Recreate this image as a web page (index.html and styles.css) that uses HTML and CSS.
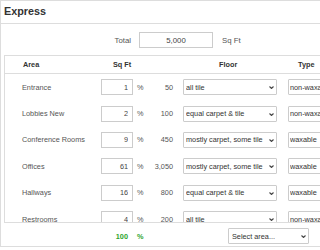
FILE: index.html
```html
<!DOCTYPE html>
<html lang="en">
<head>
  <meta charset="UTF-8">
  <title>Express</title>
  <link rel="stylesheet" href="styles.css">
</head>
<body>
  <div class="panel">
    <div class="panel-head">Express</div>

    <div class="total-row">
      <span class="total-label">Total</span>
      <input class="total-input" type="text" value="5,000">
      <span class="total-unit">Sq Ft</span>
    </div>

    <div class="grid-box">
      <div class="row head">
        <div class="h-area">Area</div>
        <div class="h-sqft">Sq Ft</div>
        <div class="h-floor">Floor</div>
        <div class="h-type">Type</div>
      </div>

      <div class="row">
        <div class="c-area">Entrance</div>
        <input class="c-pct" type="text" value="1">
        <span class="c-unit">%</span>
        <span class="c-num">50</span>
        <div class="sel c-floor">
          <select><option>all tile</option></select>
          <svg class="chev" width="5" height="3" viewBox="0 0 5 3"><polyline points="0.5,0.5 2.5,2.5 4.5,0.5"/></svg>
        </div>
        <div class="sel c-type">
          <select><option>non-waxable</option></select>
        </div>
      </div>

      <div class="row">
        <div class="c-area">Lobbies New</div>
        <input class="c-pct" type="text" value="2">
        <span class="c-unit">%</span>
        <span class="c-num">100</span>
        <div class="sel c-floor">
          <select><option>equal carpet &amp; tile</option></select>
          <svg class="chev" width="5" height="3" viewBox="0 0 5 3"><polyline points="0.5,0.5 2.5,2.5 4.5,0.5"/></svg>
        </div>
        <div class="sel c-type">
          <select><option>non-waxable</option></select>
        </div>
      </div>

      <div class="row">
        <div class="c-area">Conference Rooms</div>
        <input class="c-pct" type="text" value="9">
        <span class="c-unit">%</span>
        <span class="c-num">450</span>
        <div class="sel c-floor">
          <select><option>mostly carpet, some tile</option></select>
          <svg class="chev" width="5" height="3" viewBox="0 0 5 3"><polyline points="0.5,0.5 2.5,2.5 4.5,0.5"/></svg>
        </div>
        <div class="sel c-type">
          <select><option>waxable</option></select>
        </div>
      </div>

      <div class="row">
        <div class="c-area">Offices</div>
        <input class="c-pct" type="text" value="61">
        <span class="c-unit">%</span>
        <span class="c-num">3,050</span>
        <div class="sel c-floor">
          <select><option>mostly carpet, some tile</option></select>
          <svg class="chev" width="5" height="3" viewBox="0 0 5 3"><polyline points="0.5,0.5 2.5,2.5 4.5,0.5"/></svg>
        </div>
        <div class="sel c-type">
          <select><option>waxable</option></select>
        </div>
      </div>

      <div class="row">
        <div class="c-area">Hallways</div>
        <input class="c-pct" type="text" value="16">
        <span class="c-unit">%</span>
        <span class="c-num">800</span>
        <div class="sel c-floor">
          <select><option>equal carpet &amp; tile</option></select>
          <svg class="chev" width="5" height="3" viewBox="0 0 5 3"><polyline points="0.5,0.5 2.5,2.5 4.5,0.5"/></svg>
        </div>
        <div class="sel c-type">
          <select><option>waxable</option></select>
        </div>
      </div>

      <div class="row">
        <div class="c-area">Restrooms</div>
        <input class="c-pct" type="text" value="4">
        <span class="c-unit">%</span>
        <span class="c-num">200</span>
        <div class="sel c-floor">
          <select><option>all tile</option></select>
          <svg class="chev" width="5" height="3" viewBox="0 0 5 3"><polyline points="0.5,0.5 2.5,2.5 4.5,0.5"/></svg>
        </div>
        <div class="sel c-type">
          <select><option>non-waxable</option></select>
        </div>
      </div>
    </div>

    <div class="foot">
      <span class="f-sum">100</span>
      <span class="f-pct">%</span>
      <div class="sel f-select">
        <select><option>Select area...</option></select>
        <svg class="chev" width="5" height="3" viewBox="0 0 5 3"><polyline points="0.5,0.5 2.5,2.5 4.5,0.5"/></svg>
      </div>
    </div>
  </div>
</body>
</html>
```

FILE: styles.css
```css
* {
  margin: 0;
  padding: 0;
  box-sizing: border-box;
  font-family: 'Liberation Sans', Arial, sans-serif;
}

html, body {
  overflow: hidden;
  background: #fff;
}

.panel {
  width: 420px;
  height: 247px;
  border: 1px solid #ddd;
  color: #555;
  font-size: 7.3px;
}

.panel-head {
  height: 23px;
  padding: 4px 3px 0;
  font-size: 10.8px;
  font-weight: bold;
  color: #333;
  border-bottom: 1px solid #ddd;
}

/* total */
.total-row {
  display: flex;
  align-items: center;
  margin: 8px 0 7px;
  font-size: 7.8px;
}

.total-label {
  width: 130px;
  text-align: right;
}

.total-input {
  width: 74px;
  height: 16px;
  margin-left: 8px;
  border: 1px solid #ccc;
  text-align: center;
  font-size: 7.8px;
  color: #444;
}

.total-unit {
  margin-left: 9px;
}

/* table */
.grid-box {
  margin-left: 3px;
  height: 168px;
  border: 1px solid #ddd;
  overflow: hidden;
}

.row {
  display: flex;
  align-items: center;
  height: 26.4px;
  padding-left: 17px;
}

.row.head {
  height: 18px;
  border-bottom: 1px solid #ddd;
  font-weight: bold;
  color: #333;
}

.h-area { width: 91px; padding-left: 1px; }
.h-sqft { width: 106px; }
.h-floor { width: 79px; }

.c-area {
  width: 79px;
}

.c-pct {
  width: 32px;
  height: 16px;
  border: 1px solid #ccc;
  text-align: right;
  padding-right: 4px;
  font-size: 7.3px;
  color: #444;
}

.c-unit {
  width: 14px;
  padding-left: 4px;
}

.c-num {
  width: 26px;
  text-align: right;
}

.sel {
  position: relative;
  height: 16px;
}

.sel select {
  appearance: none;
  -webkit-appearance: none;
  width: 100%;
  height: 16px;
  border: 1px solid #ccc;
  border-radius: 1px;
  background: #fff;
  padding: 0 2px;
  font-size: 7.3px;
  color: #333;
}

.chev {
  position: absolute;
  right: 3px;
  top: 7px;
  fill: none;
  stroke: #444;
  stroke-width: 1.1;
}

.c-floor {
  width: 94px;
  margin-left: 10px;
}

.c-type {
  width: 62px;
  margin-left: 11px;
}

.c-type select {
  padding-left: 1px;
}

/* footer */
.foot {
  display: flex;
  align-items: center;
  padding-top: 5px;
}

.f-sum {
  width: 127px;
  text-align: right;
  font-weight: bold;
  color: #2fa52f;
}

.f-pct {
  width: 100px;
  padding-left: 9px;
  font-weight: bold;
  color: #2fa52f;
}

.f-select {
  width: 81px;
}

.f-select select {
  padding-left: 3px;
}
```
